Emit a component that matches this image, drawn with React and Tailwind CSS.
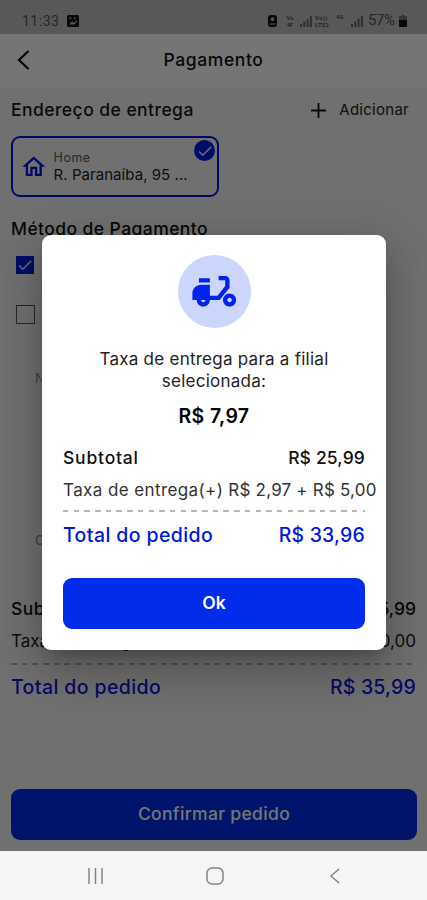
import { MdCheck } from "react-icons/md";

// Dashed rule used above every total.
function Dashes({ className }) {
  return (
    <div
      className={`h-[2px] bg-[repeating-linear-gradient(90deg,#b5b5b5_0_5.5px,transparent_5.5px_10.7px)] ${className}`}
    />
  );
}

function SignalBars() {
  return (
    <svg width="12" height="12" viewBox="0 0 12 12" fill="#666">
      <path d="M0 9h2v3H0zM3.3 6.5h2V12h-2zM6.6 4h2v8h-2zM9.9 1h2v11h-2z" />
    </svg>
  );
}

function StatusBar() {
  return (
    <div className="flex h-[34px] items-center bg-[#c0c0c0] pl-[22px] pr-[20px] pt-[7px] font-[Roboto,sans-serif] text-[#555]">
      <span className="w-[38px] whitespace-nowrap text-[14px] leading-none tracking-[0.5px]">11:33</span>
      <svg className="ml-[7px]" width="12" height="12" viewBox="0 0 12 12">
        <rect width="12" height="12" rx="1.5" fill="#111" />
        <path d="M2 9.5L5 6.5l2 1.2L10 5v1.5L7.5 9.5z" fill="#bbb" />
        <path d="M2 2.5h2.5V4H2zM7 2.5h2V4H7z" fill="#999" />
      </svg>
      <div className="ml-auto flex items-center">
        <svg width="9" height="12" viewBox="0 0 9 12">
          <rect width="9" height="12" rx="3" fill="#111" />
          <circle cx="4.5" cy="4.2" r="2" fill="#aaa" />
          <path d="M1.5 9h6" stroke="#aaa" strokeWidth="1.2" />
        </svg>
        <span className="ml-[8px] flex w-[10px] flex-col text-center text-[6px] font-bold leading-[7px]">
          <span>Vo</span>
          <span>4F</span>
        </span>
        <span className="ml-[5px]">
          <SignalBars />
        </span>
        <span className="ml-[3px] flex w-[17px] flex-col whitespace-nowrap text-[6px] font-bold leading-[7px] tracking-[0.3px]">
          <span>Vo))</span>
          <span>LTE2</span>
        </span>
        <span className="ml-[4px] w-[9px] self-start text-[6px] font-bold leading-[7px]">4G</span>
        <span className="ml-[6px]">
          <SignalBars />
        </span>
        <span className="ml-[5px] w-[28px] whitespace-nowrap text-[15px] leading-none tracking-[-0.4px]">57%</span>
        <svg className="ml-[3px]" width="8" height="12" viewBox="0 0 8 12">
          <path d="M2.5 0h3v1H8v4H0V1h2.5z" fill="#777" />
          <path d="M0 5h8v6a1 1 0 0 1-1 1H1a1 1 0 0 1-1-1z" fill="#111" />
        </svg>
      </div>
    </div>
  );
}

function Header() {
  return (
    <div className="grid h-[54px] grid-cols-[48px_1fr_48px] items-center bg-white">
      <svg className="-mt-[2px] ml-[17px]" width="13" height="20" viewBox="0 0 13 20" fill="none" stroke="#111" strokeWidth="2.2">
        <path d="M11.5 1L2 10l9.5 9" />
      </svg>
      <h1 className="pb-px text-center text-[17.5px] font-medium tracking-[0.6px] text-[#111]">Pagamento</h1>
    </div>
  );
}

function AddressCard() {
  return (
    <div className="relative mt-[14px] flex h-[61px] w-[208px] items-center rounded-[9px] border-2 border-[#0015d8] pl-[7px]">
      <svg width="27.6" height="27.6" viewBox="0 0 24 24" fill="#0015d8">
        <path d="M12 5.69l5 4.5V18h-2v-6H9v6H7v-7.81l5-4.5M12 3L2 12h3v8h6v-6h2v6h6v-8h3L12 3z" />
      </svg>
      <div className="ml-[6px] whitespace-nowrap pb-[2px]">
        <p className="text-[12.5px] leading-[17px] tracking-[0.5px] text-[#555]">Home</p>
        <p className="text-[15px] leading-[17px] tracking-[0.05px] text-[#222]">R. Paranaíba, 95 ...</p>
      </div>
      <span className="absolute right-[2px] top-[2px] flex size-[21px] items-center justify-center rounded-full bg-[#001ee0] text-[#eee]">
        <MdCheck size={18} />
      </span>
    </div>
  );
}

function Checkout() {
  return (
    <div className="flex flex-1 flex-col bg-[#f5f5f5] px-[11px]">
      <div className="mt-[10px] flex h-[24px] items-center justify-between">
        <h2 className="text-[17.5px] font-medium tracking-[0.45px] text-[#161616]">Endereço de entrega</h2>
        <div className="flex items-center pr-[7px]">
          <svg width="15" height="15" viewBox="0 0 15 15" stroke="#111" strokeWidth="1.8">
            <path d="M7.5 0v15M0 7.5h15" />
          </svg>
          <span className="ml-[13px] text-[15px] tracking-[0.27px] text-[#222]">Adicionar</span>
        </div>
      </div>
      <AddressCard />
      <h2 className="mt-[20px] text-[17.5px] font-medium leading-[24px] tracking-[0.42px] text-[#111]">
        Método de Pagamento
      </h2>
      <span className="ml-[5px] mt-[15px] flex size-[18px] items-center justify-center bg-[#001ee0] text-[#eee]">
        <MdCheck size={18} />
      </span>
      <span className="ml-[5px] mt-[31px] size-[19px] border-[1.5px] border-[#555]" />
      <p className="ml-[24px] mt-[44px] text-[13px] leading-[20px] text-[#888]">N</p>
      <p className="ml-[24px] mt-[142px] text-[13px] leading-[20px] text-[#888]">C</p>
      <div className="mt-[47px] flex h-[24px] items-center justify-between text-[17.5px] font-medium text-[#111]">
        <span className="tracking-[0.5px]">Subtotal</span>
        <span>R$ 25,99</span>
      </div>
      <div className="mt-[9px] flex h-[24px] items-center justify-between text-[17px] text-[#222]">
        <span>Taxa de entrega</span>
        <span>R$ 10,00</span>
      </div>
      <Dashes className="mt-[9px] shrink-0" />
      <div className="mt-[11px] flex h-[24px] items-center justify-between font-medium text-[#1216d8]">
        <span className="text-[19.5px] tracking-[0.4px]">Total do pedido</span>
        <span className="text-[19.5px] tracking-[0.2px]">R$ 35,99</span>
      </div>
      <button className="-mr-px mb-[11px] mt-auto h-[51px] rounded-[9px] bg-[#002cec] text-[17.5px] font-medium tracking-[0.35px] text-white">
        Confirmar pedido
      </button>
    </div>
  );
}

function FeeDialog() {
  return (
    <div className="absolute left-[42px] top-[235px] flex h-[415px] w-[344px] flex-col rounded-[9px] bg-white px-[21px] shadow-[0_11px_15px_-7px_rgba(0,0,0,0.2),0_24px_38px_3px_rgba(0,0,0,0.14),0_9px_46px_8px_rgba(0,0,0,0.12)]">
      <div className="mt-[20px] flex size-[73px] items-center justify-center self-center rounded-full bg-[#ccd5fc]">
        <svg width="52.5" height="52.5" viewBox="0 0 24 24" fill="#0024ec">
          <path d="M19 7c0-1.1-.9-2-2-2h-3v2h3v2.65L13.52 14H10V9H6c-2.21 0-4 1.79-4 4v3h2c0 1.66 1.34 3 3 3s3-1.34 3-3h4.48L19 10.35V7zM7 17c-.55 0-1-.45-1-1h2c0 .55-.45 1-1 1z" />
          <path d="M5 6h5v2H5zM19 13c-1.66 0-3 1.34-3 3s1.34 3 3 3 3-1.34 3-3-1.34-3-3-3zm0 4c-.55 0-1-.45-1-1s.45-1 1-1 1 .45 1 1-.45 1-1 1z" />
        </svg>
      </div>
      <p className="mt-[20px] text-center text-[17px] leading-[22px] tracking-[0.25px] text-[#222]">
        Taxa de entrega para a filial
        <br />
        selecionada:
      </p>
      <p className="mt-[12px] text-center text-[19.5px] font-semibold leading-[24px] tracking-[0.35px] text-black">R$ 7,97</p>
      <div className="mt-[18px] flex h-[24px] items-center justify-between text-[17.5px] font-medium text-[#111]">
        <span className="tracking-[0.8px]">Subtotal</span>
        <span className="tracking-[0.15px]">R$ 25,99</span>
      </div>
      <div className="mt-[9px] flex h-[24px] items-center gap-[5px] whitespace-nowrap text-[17px] text-[#333]">
        <span className="tracking-[0.4px]">Taxa de entrega(+)</span>
        <span className="tracking-[0.2px]">R$ 2,97 + R$ 5,00</span>
      </div>
      <Dashes className="mt-[7px] shrink-0" />
      <div className="mt-[12px] flex h-[24px] items-center justify-between font-medium text-[#0018dc]">
        <span className="text-[19.5px] tracking-[0.4px]">Total do pedido</span>
        <span className="text-[19.5px] tracking-[0.2px]">R$ 33,96</span>
      </div>
      <button className="mb-[21px] mt-auto h-[51px] rounded-[9px] bg-[#002cec] text-[17.5px] font-semibold text-white">
        Ok
      </button>
    </div>
  );
}

function NavBar() {
  return (
    <div className="flex h-[49px] items-center bg-[#f5f5f5] pl-[87px] pr-[87px] pt-px">
      <svg width="17" height="16" viewBox="0 0 17 16" stroke="#858585" strokeWidth="1.5">
        <path d="M2 0v16M8.5 0v16M15 0v16" />
      </svg>
      <svg className="ml-[102px]" width="18" height="18" viewBox="0 0 18 18" fill="none" stroke="#858585" strokeWidth="1.5">
        <rect x="1" y="1" width="16" height="16" rx="5" />
      </svg>
      <svg className="ml-auto" width="11" height="16" viewBox="0 0 11 16" fill="none" stroke="#858585" strokeWidth="1.5">
        <path d="M10 1L2 8l8 7" />
      </svg>
    </div>
  );
}

export default function App() {
  return (
    <div className="relative flex h-[900px] w-[427px] flex-col overflow-hidden font-[Inter,sans-serif]">
      <div className="relative flex h-[851px] flex-col">
        <StatusBar />
        <Header />
        <Checkout />
        {/* Scrim */}
        <div className="absolute inset-0 bg-black/54" />
      </div>
      <FeeDialog />
      <NavBar />
    </div>
  );
}
